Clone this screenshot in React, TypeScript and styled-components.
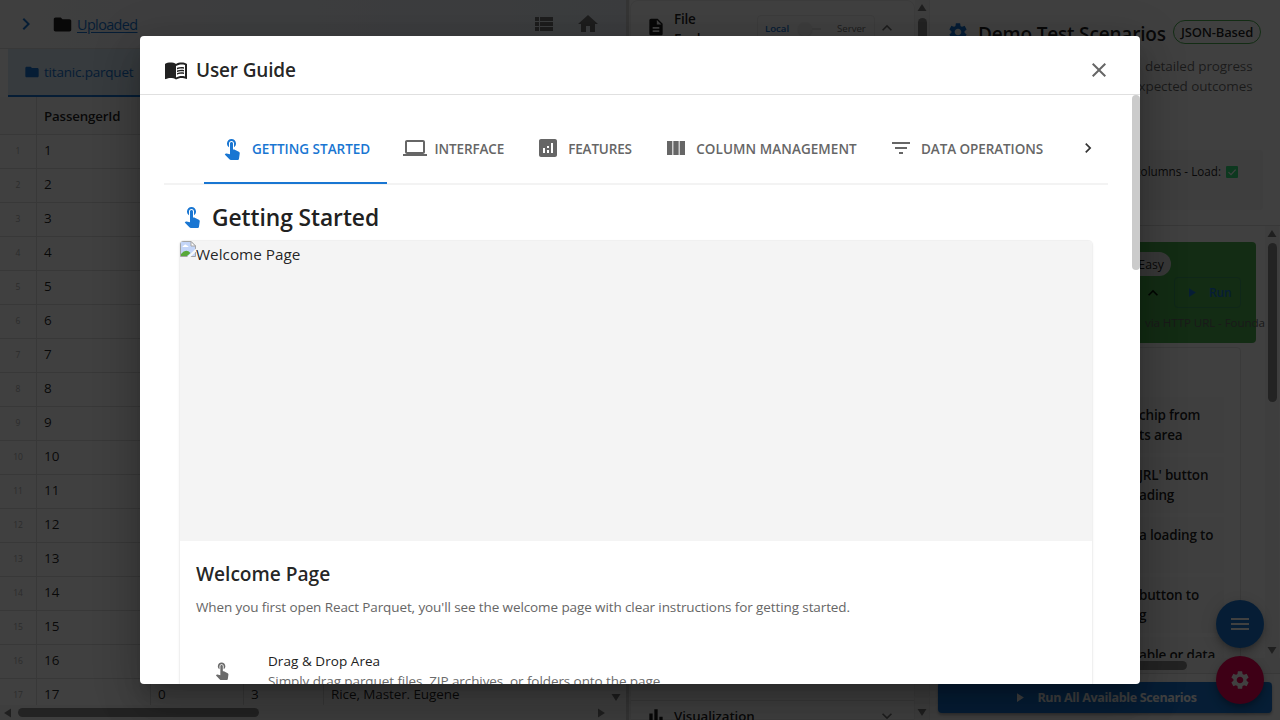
import React from 'react';
import styled, { createGlobalStyle } from 'styled-components';
import {
  MdAnalytics, MdBarChart, MdChevronRight, MdClose, MdComputer, MdDescription, MdExpandLess,
  MdExpandMore, MdFilterList, MdFolder, MdHome, MdMenu, MdMenuBook, MdPlayArrow, MdSettings,
  MdViewColumn, MdViewList,
} from 'react-icons/md';

const Global = createGlobalStyle`
  * { box-sizing: border-box; }
  html, body { margin: 0; overflow: hidden; }
  body {
    font-family: "Open Sans", "Noto Sans", sans-serif;
    color: rgba(0, 0, 0, 0.87);
    background: #fff;
  }
  svg { display: block; flex: none; }
`;

const Screen = styled.div`
  position: relative;
  width: 1280px;
  height: 720px;
  overflow: hidden;
`;

const Workspace = styled.div`
  display: grid;
  grid-template-columns: 626px 3px 300px 351px;
  height: 720px;
`;

const Text = styled.span<{ $size?: number; $weight?: number; $track?: number; $color?: string }>`
  font-size: ${(p) => p.$size ?? 13.5}px;
  font-weight: ${(p) => p.$weight ?? 400};
  letter-spacing: ${(p) => p.$track ?? 0}px;
  color: ${(p) => p.$color ?? 'inherit'};
  white-space: nowrap;
`;

/* ---------- data panel ---------- */

const DataPanel = styled.section`
  display: flex;
  flex-direction: column;
  min-width: 0;
  height: 720px;
  overflow: hidden;
`;

const Toolbar = styled.header`
  display: flex;
  align-items: center;
  height: 49px;
  padding: 0 26px 0 14px;
  background: linear-gradient(90deg, #fafafa, #eaf0f8);
  border-bottom: 1px solid #e0e0e0;
  color: #333;
`;

const Crumb = styled.div`
  display: flex;
  align-items: center;
  gap: 4px;
  margin-left: 14px;
  color: #212121;
  flex: 1;
`;

const CrumbLink = styled.a`
  margin-top: 2px;
  font-size: 14.4px;
  letter-spacing: -0.6px;
  line-height: 20px;
  color: #1976d2;
  text-decoration: underline;
  text-underline-offset: 2px;
`;

const ToolIcons = styled.div`
  display: flex;
  gap: 20px;
  color: #757575;
`;

const FileTabs = styled.div`
  display: flex;
  height: 48px;
  padding-left: 8px;
  background: #fff;
`;

const FileTab = styled.div`
  display: flex;
  align-items: center;
  gap: 4px;
  width: 200px;
  padding-left: 16px;
  background: #dbe9f5;
  border-bottom: 2px solid #1976d2;
  color: #1976d2;
`;

const Table = styled.div`
  flex: 1;
  overflow: hidden;
  background: #fff;
`;

const TableRow = styled.div<{ $head?: boolean }>`
  display: grid;
  grid-template-columns: 37px 114px 93px 80px 1fr;
  height: ${(p) => (p.$head ? 38 : 34)}px;
  padding-bottom: ${(p) => (p.$head ? 0 : 0)}px;
  border-bottom: 1px solid #e0e0e0;
  background: ${(p) => (p.$head ? '#fafafa' : '#fff')};
`;

const Cell = styled.div<{ $index?: boolean; $head?: boolean }>`
  display: flex;
  align-items: center;
  justify-content: ${(p) => (p.$index ? 'center' : 'flex-start')};
  padding: 0 ${(p) => (p.$index ? 0 : 7)}px ${(p) => (p.$head ? 0 : 3)}px;
  border-right: 1px solid #e0e0e0;
  &:last-child { border-right: 0; }
`;

const ScrollTrackX = styled.div`
  display: flex;
  align-items: center;
  height: 15px;
  padding: 0 20px 0 3px;
  background: #f8f8f8;
  color: #7e7e7e;
`;

const ThumbX = styled.div<{ $width: number }>`
  width: ${(p) => p.$width}px;
  height: 9px;
  margin-left: 5px;
  border-radius: 5px;
  background: #8b8b8b;
`;

const ArrowSlot = styled.div`
  margin-left: auto;
`;

const RowArrow = styled.div`
  margin: 5px -2px 0 auto;
  color: #7e7e7e;
`;

const Splitter = styled.div`
  background: #d4d4d4;
`;

/* ---------- tools panel ---------- */

const ToolsPanel = styled.section`
  display: grid;
  grid-template-columns: 1fr 14px;
  height: 720px;
  overflow: hidden;
  border-left: 1px solid #f2f2f2;
`;

const ToolsColumn = styled.div`
  display: flex;
  flex-direction: column;
  justify-content: space-between;
  border: 1px solid #eee;
  border-radius: 8px 8px 0 0;
`;

const ExplorerHead = styled.div`
  display: flex;
  align-items: flex-start;
  height: 60px;
  padding: 8px 10px 0 15px;
`;

const ExplorerTitle = styled.div`
  width: 83px;
  margin-left: 8px;
  font-size: 13.5px;
  font-weight: 600;
  line-height: 20px;
  letter-spacing: -0.2px;
`;

const DocIcon = styled.div`
  margin-top: 8px;
`;

const SourceSwitch = styled.div`
  display: flex;
  flex: none;
  align-items: center;
  width: 118px;
  height: 27px;
  margin-top: 6px;
  padding: 0 7px;
  border: 1px solid #ededed;
  border-radius: 4px;
`;

const SwitchTrack = styled.div`
  display: flex;
  align-items: center;
  margin: 0 16px 0 9px;
  &::before {
    content: '';
    width: 14px;
    height: 14px;
    border-radius: 50%;
    background: #f4f4f4;
    box-shadow: 0 1px 2px rgba(0, 0, 0, 0.16);
  }
  &::after {
    content: '';
    width: 9px;
    height: 2px;
    background: #e6e6e6;
  }
`;

const HeadChevron = styled.div`
  margin: 9px 0 0 2px;
  color: #757575;
`;

const VisualHead = styled.div`
  display: flex;
  align-items: center;
  gap: 8px;
  height: 30px;
  margin-bottom: -11px;
  padding: 0 17px 0 15px;
  border-top: 1px solid #e8e8e8;
`;

const ScrollColumn = styled.div`
  display: flex;
  flex-direction: column;
  align-items: center;
  height: 100%;
  padding: 3px 0;
  background: #f8f8f8;
  color: #7e7e7e;
`;

const ThumbY = styled.div<{ $height: number; $gap: number }>`
  width: 9px;
  height: ${(p) => p.$height}px;
  margin-top: ${(p) => p.$gap}px;
  margin-bottom: auto;
  border-radius: 5px;
  background: #8b8b8b;
`;

/* ---------- scenario panel ---------- */

const ScenarioPanel = styled.section`
  display: flex;
  flex-direction: column;
  height: 720px;
  overflow: hidden;
  background: #fff;
  border-left: 1px solid #eee;
`;

const ScenarioHead = styled.div`
  display: flex;
  align-items: center;
  height: 56px;
  padding: 8px 0 0 17px;
`;

const HeadGear = styled.div`
  width: 31px;
  color: #1976d2;
`;

const HeadTitle = styled.div`
  padding-top: 3px;
  width: 188px;
`;

const SourceChip = styled.div`
  display: flex;
  align-items: center;
  justify-content: center;
  width: 88px;
  height: 24px;
  margin-left: 7px;
  border: 1px solid #4caf50;
  border-radius: 12px;
`;

const Intro = styled.p`
  margin: 0;
  padding: 0 27.5px 0 0;
  height: 94px;
  font-size: 13.5px;
  letter-spacing: -0.12px;
  line-height: 20px;
  text-align: right;
  color: rgba(0, 0, 0, 0.6);
`;

const SummaryBox = styled.div`
  display: flex;
  justify-content: flex-end;
  gap: 5px;
  height: 60px;
  margin: 0 17px 0 8px;
  padding: 13px 25px 0 0;
  background: #f5f5f5;
  border-radius: 4px;
`;

const BadgeSlot = styled.div`
  margin-top: 3px;
`;

const ScenarioScroll = styled.div`
  display: grid;
  grid-template-columns: 1fr 14px;
  height: 433px;
  margin-top: 15px;
  padding-right: 1px;
  border-top: 1px solid #e0e0e0;
`;

const ScenarioList = styled.div`
  min-width: 0;
  overflow: hidden;
  padding: 16px 0 0 8px;
`;

const ScenarioCard = styled.div`
  width: 318px;
  height: 101px;
  padding: 10px 0 0 200px;
  background: #4caf50;
  border-radius: 4px;
`;

const LevelChip = styled.div`
  display: flex;
  align-items: center;
  justify-content: flex-end;
  width: 33px;
  height: 24px;
  padding-right: 7px;
  background: #e0e0e0;
  border-radius: 0 12px 12px 0;
`;

const ScenarioActions = styled.div`
  display: flex;
  align-items: center;
  height: 33px;
  margin: 0 0 6px 5px;
`;

const RunButton = styled.div`
  display: flex;
  align-items: center;
  gap: 10px;
  width: 67px;
  height: 31px;
  margin-left: 11px;
  padding-left: 9px;
  border: 1px solid #3e9a63;
  border-radius: 4px;
  color: #1976d2;
`;

const SourceNote = styled.div`
  padding-left: 7px;
  font-size: 11.6px;
  line-height: 16px;
  letter-spacing: -0.08px;
  white-space: nowrap;
  color: #666;
`;

const StepsCard = styled.div`
  display: flex;
  flex-direction: column;
  gap: 4px;
  width: 303px;
  height: 330px;
  margin-top: 4px;
  padding: 49px 16px 0 160px;
  border: 1px solid #e6e6e6;
  border-radius: 4px;
`;

const Step = styled.div`
  flex: none;
  height: 56px;
  padding: 8px 0 8px 40px;
  background: #f9f9f9;
  font-size: 13.5px;
  font-weight: 600;
  line-height: 20px;
  letter-spacing: -0.18px;
  white-space: nowrap;
`;

const ScenarioFooter = styled.div`
  flex: 1;
  padding: 8px 8px 0;
  border-top: 1px solid #e0e0e0;
`;

const RunAllButton = styled.div`
  display: flex;
  align-items: center;
  justify-content: center;
  gap: 10px;
  height: 31px;
  padding-right: 1px;
  border-radius: 4px;
  background: #1976d2;
  box-shadow: 0 2px 3px rgba(0, 0, 0, 0.3);
  color: #fff;
`;

const FabStack = styled.div`
  position: absolute;
  right: 16px;
  bottom: 16px;
  display: flex;
  flex-direction: column;
  gap: 8px;
`;

const Fab = styled.div<{ $color: string }>`
  display: flex;
  align-items: center;
  justify-content: center;
  width: 48px;
  height: 48px;
  border-radius: 50%;
  background: ${(p) => p.$color};
  box-shadow: 0 3px 5px -1px rgba(0, 0, 0, 0.2), 0 6px 10px rgba(0, 0, 0, 0.14), 0 1px 18px rgba(0, 0, 0, 0.12);
  color: #fff;
`;

/* ---------- dialog ---------- */

const Backdrop = styled.div`
  position: absolute;
  inset: 0;
  display: flex;
  align-items: center;
  justify-content: center;
  background: rgba(0, 0, 0, 0.75);
`;

const Dialog = styled.div`
  display: flex;
  flex-direction: column;
  width: 1000px;
  height: 648px;
  overflow: hidden;
  border-radius: 4px;
  background: #fff;
  box-shadow: 0 11px 15px -7px rgba(0, 0, 0, 0.2), 0 24px 38px 3px rgba(0, 0, 0, 0.14), 0 9px 46px 8px rgba(0, 0, 0, 0.12);
`;

const DialogTitle = styled.div`
  display: flex;
  flex: none;
  align-items: center;
  gap: 8px;
  height: 59px;
  padding: 10px 29px 0 24px;
  border-bottom: 1px solid #e0e0e0;
`;

const CloseButton = styled.div`
  margin: -1px 0 0 auto;
  color: #666;
`;

const DialogBody = styled.div`
  display: grid;
  grid-template-columns: 1fr 8px;
  flex: 1;
  min-height: 0;
`;

const DialogThumb = styled.div`
  height: 175px;
  border-radius: 4px;
  background: #cbcbcb;
`;

const Content = styled.div`
  min-width: 0;
  overflow: hidden;
  padding: 17px 24px 0;
`;

const Tabs = styled.div`
  display: flex;
  height: 73px;
  padding-left: 40px;
  border-bottom: 2px solid #f3f3f3;
`;

const Tab = styled.div<{ $width: number; $active?: boolean }>`
  display: flex;
  flex: none;
  align-items: center;
  gap: 8px;
  width: ${(p) => p.$width}px;
  height: 72px;
  padding: 3px 0 0 16px;
  color: ${(p) => (p.$active ? '#1976d2' : '#666')};
  border-bottom: 2px solid ${(p) => (p.$active ? '#1976d2' : 'transparent')};
  svg { margin-bottom: 1px; }
`;

const TabsNext = styled.div`
  display: flex;
  align-items: center;
  margin: 0 10px 0 auto;
`;

const Section = styled.div`
  padding: 16px;
`;

const SectionTitle = styled.div`
  display: flex;
  align-items: center;
  gap: 8px;
  height: 32px;
  margin-bottom: 8px;
  color: #1976d2;
  svg { margin-bottom: 2px; }
`;

const GuideCard = styled.article`
  width: 912px;
  height: 800px;
  border-radius: 4px;
  overflow: hidden;
  box-shadow: 0 0 0 1px #f0f0f0, 0 1px 3px rgba(0, 0, 0, 0.12);
`;

const Picture = styled.div`
  display: flex;
  align-items: flex-start;
  height: 300px;
  background: #f4f4f4;
`;

const AltText = styled.div`
  padding-top: 2px;
  font-size: 15.3px;
  line-height: 22px;
`;

const CardBody = styled.div`
  display: flex;
  flex-direction: column;
  padding: 17px 16px;
`;

const CardTitle = styled.div`
  font-size: 19.2px;
  font-weight: 600;
  line-height: 32px;
  letter-spacing: -0.05px;
`;

const CardIntro = styled.div`
  margin-top: 7px;
  font-size: 13.5px;
  line-height: 20px;
  letter-spacing: -0.103px;
  white-space: nowrap;
  color: #666;
`;

const FeatureRow = styled.div`
  display: flex;
  margin-top: 34px;
  padding-left: 16px;
  color: #6b6b6b;
`;

const FeatureText = styled.div`
  display: flex;
  flex-direction: column;
  margin-left: 36px;
  line-height: 20px;
`;

const FeatureIcon = styled.div`
  margin-top: 9px;
`;

type Direction = 'up' | 'down' | 'left' | 'right';

const arrowPoints: Record<Direction, string> = {
  up: '5,1 9.5,8 0.5,8',
  down: '5,9 9.5,2 0.5,2',
  left: '1,5 8,0.5 8,9.5',
  right: '9,5 2,0.5 2,9.5',
};

const Arrow = ({ to }: { to: Direction }) => (
  <svg width="10" height="10" viewBox="0 0 10 10" fill="currentColor">
    <polygon points={arrowPoints[to]} />
  </svg>
);

const TouchIcon = ({ size = 24 }: { size?: number }) => (
  <svg width={size} height={size} viewBox="0 0 24 24" fill="currentColor">
    <path d="M9 11.24V7.5C9 6.12 10.12 5 11.5 5S14 6.12 14 7.5v3.74c1.21-.81 2-2.18 2-3.74C16 5.01 13.99 3 11.5 3S7 5.01 7 7.5c0 1.56.79 2.93 2 3.74zm9.84 4.63l-4.54-2.26c-.17-.07-.35-.11-.54-.11H13v-6c0-.83-.67-1.5-1.5-1.5S10 6.67 10 7.5v10.74l-3.43-.72c-.08-.01-.15-.03-.24-.03-.31 0-.59.13-.79.33l-.79.8 4.94 4.94c.27.27.65.44 1.06.44h6.79c.75 0 1.33-.55 1.44-1.28l.75-5.27c.01-.07.02-.14.02-.2 0-.62-.38-1.16-.91-1.38z" />
  </svg>
);

const CheckBadge = () => (
  <svg width="12" height="12" viewBox="0 0 12 12">
    <rect width="12" height="12" rx="1" fill="#34e07c" />
    <path d="M2.5 6.2 5 8.7 9.6 3.6" fill="none" stroke="#fff" strokeWidth="1.2" />
  </svg>
);

const MissingPicture = () => (
  <svg width="16" height="16" viewBox="0 0 16 16">
    <path d="M.5.5h10.500l4.500 4.500v10.500H.5z" fill="#c3d5f8" stroke="#a4a4a4" />
    <path d="M11 .5v4.500h4.500z" fill="#fff" stroke="#a4a4a4" />
    <path d="M2.500 6q0-1.500 1.500-1.500 1.300-2 2.800 0 1.700 0 1.700 1.500z" fill="#fff" />
    <path d="M1 13q5-6 9.500-1L7 15H1z" fill="#58a839" />
    <path d="M7 16 16 7.500v3L10.500 16z" fill="#f8f8f8" />
  </svg>
);

const tabs = [
  { label: 'GETTING STARTED', icon: TouchIcon, width: 182.6, track: 0 },
  { label: 'INTERFACE', icon: MdComputer, width: 133.6, track: -0.13 },
  { label: 'FEATURES', icon: MdAnalytics, width: 128, track: -0.15 },
  { label: 'COLUMN MANAGEMENT', icon: MdViewColumn, width: 224.8, track: 0.07 },
  { label: 'DATA OPERATIONS', icon: MdFilterList, width: 187, track: -0.08 },
];

const steps = [
  ['chip from', 'ts area'],
  ["JRL' button", 'ading'],
  ['a loading to'],
  ['button to', 'g'],
  ['able or data'],
];

const rows = Array.from({ length: 17 }, (_, i) =>
  i === 16
    ? { id: 17, survived: '0', pclass: '3', name: 'Rice, Master. Eugene' }
    : { id: i + 1, survived: '', pclass: '', name: '' },
);

export default function App() {
  return (
    <Screen>
      <Global />
      <Workspace>
        <DataPanel>
          <Toolbar>
            <MdChevronRight size={24} color="#1976d2" />
            <Crumb>
              <MdFolder size={21} />
              <CrumbLink>Uploaded</CrumbLink>
            </Crumb>
            <ToolIcons>
              <MdViewList size={24} />
              <MdHome size={24} />
            </ToolIcons>
          </Toolbar>
          <FileTabs>
            <FileTab>
              <MdFolder size={16} />
              <Text $track={-0.2}>titanic.parquet</Text>
            </FileTab>
          </FileTabs>
          <Table>
            <TableRow $head>
              <Cell $index $head />
              <Cell $head><Text $size={13.3} $weight={600} $track={-0.16}>PassengerId</Text></Cell>
              <Cell $head />
              <Cell $head />
              <Cell $head />
            </TableRow>
            {rows.map((row) => (
              <TableRow key={row.id}>
                <Cell $index><Text $size={8.5} $color="#b0b0b0">{row.id}</Text></Cell>
                <Cell><Text>{row.id}</Text></Cell>
                <Cell><Text>{row.survived}</Text></Cell>
                <Cell><Text>{row.pclass}</Text></Cell>
                <Cell>
                  <Text $track={-0.1}>{row.name}</Text>
                  {row.name && <RowArrow><Arrow to="down" /></RowArrow>}
                </Cell>
              </TableRow>
            ))}
          </Table>
          <ScrollTrackX>
            <Arrow to="left" />
            <ThumbX $width={241} />
            <ArrowSlot><Arrow to="right" /></ArrowSlot>
          </ScrollTrackX>
        </DataPanel>

        <Splitter />

        <ToolsPanel>
          <ToolsColumn>
            <ExplorerHead>
              <DocIcon><MdDescription size={20} /></DocIcon>
              <ExplorerTitle>File<br />Explorer</ExplorerTitle>
              <SourceSwitch>
                <Text $size={9.6} $weight={600} $color="#1976d2">Local</Text>
                <SwitchTrack />
                <Text $size={9.6} $color="#777">Server</Text>
              </SourceSwitch>
              <HeadChevron><MdExpandLess size={20} /></HeadChevron>
            </ExplorerHead>
            <VisualHead>
              <MdBarChart size={20} />
              <Text $weight={600} $size={13.3} $track={-0.08}>Visualization</Text>
              <ArrowSlot><MdExpandMore size={20} color="#757575" /></ArrowSlot>
            </VisualHead>
          </ToolsColumn>
          <ScrollColumn>
            <Arrow to="up" />
            <ThumbY $height={560} $gap={5} />
            <Arrow to="down" />
          </ScrollColumn>
        </ToolsPanel>

        <ScenarioPanel>
          <ScenarioHead>
            <HeadGear><MdSettings size={22} /></HeadGear>
            <HeadTitle><Text $size={19} $weight={600} $track={-0.18}>Demo Test Scenarios</Text></HeadTitle>
            <SourceChip><Text $size={13} $weight={600} $track={-0.15}>JSON-Based</Text></SourceChip>
          </ScenarioHead>
          <Intro>detailed progress<br />expected outcomes</Intro>
          <SummaryBox>
            <Text $size={11.7}>columns - Load:</Text>
            <BadgeSlot><CheckBadge /></BadgeSlot>
          </SummaryBox>
          <ScenarioScroll>
            <ScenarioList>
              <ScenarioCard>
                <LevelChip><Text $size={12.3}>Easy</Text></LevelChip>
                <ScenarioActions>
                  <MdExpandLess size={20} />
                  <RunButton>
                    <MdPlayArrow size={15} />
                    <Text $size={12} $weight={600} $track={-0.1}>Run</Text>
                  </RunButton>
                </ScenarioActions>
                <SourceNote>via HTTP URL - Founda</SourceNote>
              </ScenarioCard>
              <StepsCard>
                {steps.map((lines) => (
                  <Step key={lines[0]}>
                    {lines.map((line) => <div key={line}>{line}</div>)}
                  </Step>
                ))}
              </StepsCard>
            </ScenarioList>
            <ScrollColumn>
              <Arrow to="up" />
              <ThumbY $height={159} $gap={4} />
              <Arrow to="down" />
            </ScrollColumn>
          </ScenarioScroll>
          <ScrollTrackX>
            <Arrow to="left" />
            <ThumbX $width={239} />
            <ArrowSlot><Arrow to="right" /></ArrowSlot>
          </ScrollTrackX>
          <ScenarioFooter>
            <RunAllButton>
              <MdPlayArrow size={15} />
              <Text $size={12.5} $weight={700} $track={-0.33}>Run All Available Scenarios</Text>
            </RunAllButton>
          </ScenarioFooter>
        </ScenarioPanel>
      </Workspace>

      <FabStack>
        <Fab $color="#1976d2"><MdMenu size={24} /></Fab>
        <Fab $color="#f50057"><MdSettings size={22} /></Fab>
      </FabStack>

      <Backdrop>
        <Dialog>
          <DialogTitle>
            <MdMenuBook size={24} />
            <Text $size={19} $weight={600} $track={-0.16}>User Guide</Text>
            <CloseButton><MdClose size={24} /></CloseButton>
          </DialogTitle>
          <DialogBody>
            <Content>
              <Tabs>
                {tabs.map(({ label, icon: Icon, width, track }, i) => (
                  <Tab key={label} $width={width} $active={i === 0}>
                    <Icon size={24} />
                    <Text $size={13.5} $weight={600} $track={track}>{label}</Text>
                  </Tab>
                ))}
                <TabsNext><MdChevronRight size={20} color="#333" /></TabsNext>
              </Tabs>
              <Section>
                <SectionTitle>
                  <TouchIcon />
                  <Text $size={22.8} $weight={600} $track={-0.07} $color="#212121">Getting Started</Text>
                </SectionTitle>
                <GuideCard>
                  <Picture>
                    <MissingPicture />
                    <AltText>Welcome Page</AltText>
                  </Picture>
                  <CardBody>
                    <CardTitle>Welcome Page</CardTitle>
                    <CardIntro>
                      When you first open React Parquet, you'll see the welcome page with clear instructions for getting started.
                    </CardIntro>
                    <FeatureRow>
                      <FeatureIcon><TouchIcon size={20} /></FeatureIcon>
                      <FeatureText>
                        <Text $track={0.05} $color="#212121">Drag &amp; Drop Area</Text>
                        <Text $track={-0.085}>Simply drag parquet files, ZIP archives, or folders onto the page</Text>
                      </FeatureText>
                    </FeatureRow>
                  </CardBody>
                </GuideCard>
              </Section>
            </Content>
            <DialogThumb />
          </DialogBody>
        </Dialog>
      </Backdrop>
    </Screen>
  );
}
